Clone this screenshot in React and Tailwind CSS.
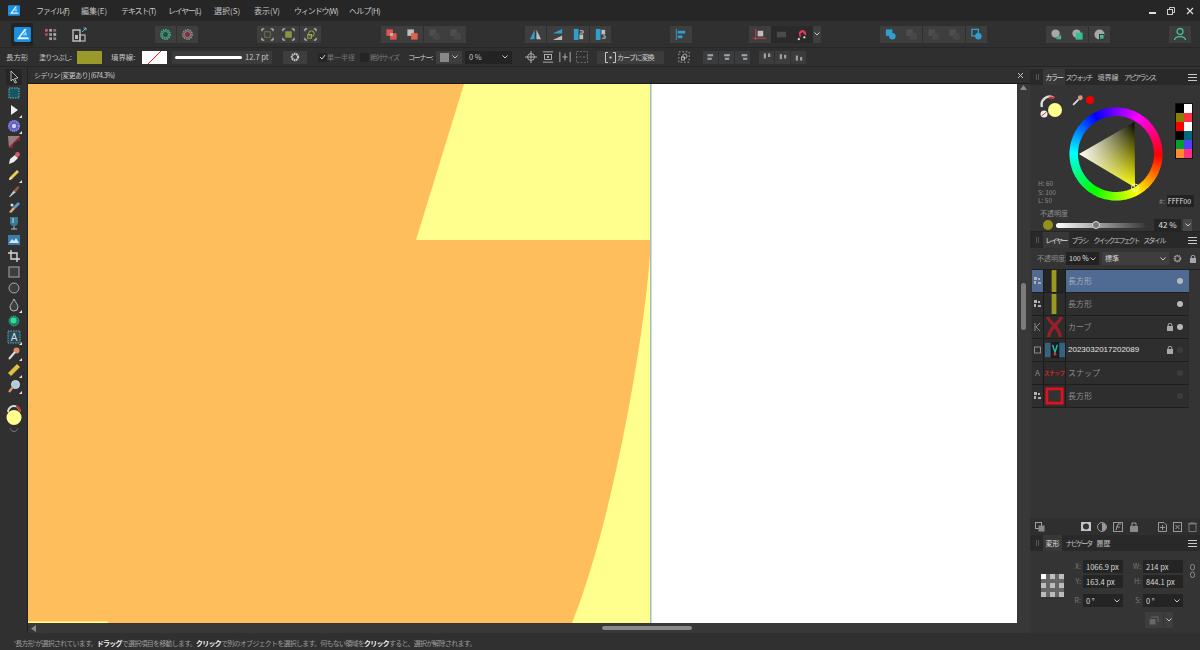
import React from 'react';

const MENU = [
  ['ファイル(F)', 'w-[45px]', 'tracking-[-1.3px]'],
  ['編集(E)', 'w-[40px]', ''],
  ['テキスト(T)', 'w-[47px]', 'tracking-[-1.1px]'],
  ['レイヤー(L)', 'w-[46px]', 'tracking-[-1.3px]'],
  ['選択(S)', 'w-[40px]', ''],
  ['表示(V)', 'w-[40px]', ''],
  ['ウィンドウ(W)', 'w-[55px]', 'tracking-[-1.1px]'],
  ['ヘルプ(H)', 'w-[30px]', 'tracking-[-0.7px]'],
];

const Logo = ({ className }) => (
  <svg viewBox="0 0 18 16" className={className}>
    <rect width="18" height="16" rx="1.5" fill="#1b8fe0" />
    <path d="M3 13 L11 2 L13.5 2 L6.5 11 L15 11 L16 13 Z" fill="#e8f6ff" />
    <path d="M9 9 L12.5 4 L14 9 Z" fill="#7fd0ff" />
  </svg>
);

const Btn = ({ children, dark, wide }) => (
  <div className={`${wide ? 'w-[22px]' : 'w-[21px]'} h-[17px] flex items-center justify-center ${dark ? 'bg-[#2a2a2a]' : 'bg-[#3e3e3e]'}`}>
    {children}
  </div>
);

const Ico = ({ children, size = 13 }) => (
  <svg width={size} height={size} viewBox="0 0 14 14">{children}</svg>
);

const Gear = ({ color, core }) => (
  <Ico>
    <circle cx="7" cy="7" r="5" fill="none" stroke={color} strokeWidth="1.6" strokeDasharray="1.8 0.7" />
    <circle cx="7" cy="7" r="3.4" fill={core} stroke={color} strokeWidth="1" />
  </Ico>
);

const Frame = ({ children }) => (
  <Ico>
    <path d="M1 3.5 V1 H3.5 M10.5 1 H13 V3.5 M13 10.5 V13 H10.5 M3.5 13 H1 V10.5" fill="none" stroke="#dcdcdc" strokeWidth="1" />
    {children}
  </Ico>
);

const Boolean1 = ({ a, b, dim }) => (
  <Ico>
    <rect x="1.5" y="1.5" width="7" height="7" fill={dim ? '#4e4e4e' : a} />
    <rect x="5.5" y="5.5" width="7" height="7" fill={dim ? '#484848' : b} />
  </Ico>
);

const Toolbar = () => (
  <div className="h-[27px] bg-[#303030] flex items-center border-b border-[#262626]">
    <div className="ml-[11px] w-[22px] h-[23px] bg-[#232323] flex items-center justify-center">
      <Logo className="w-[17px] h-[15px]" />
    </div>
    <div className="ml-[12px] w-[13px] h-[13px]">
      <svg viewBox="0 0 14 14" className="w-full h-full">
        <rect x="0" y="1" width="3" height="3" fill="#b8606a" /><rect x="4.5" y="1" width="3" height="3" fill="#b89a9a" /><rect x="9" y="1" width="3" height="3" fill="#777" />
        <rect x="0" y="5.5" width="3" height="3" fill="#a84a58" /><rect x="4.5" y="5.5" width="3" height="3" fill="#999" /><rect x="9" y="5.5" width="3" height="3" fill="#aaa" />
        <rect x="4.5" y="10" width="3" height="3" fill="#b89a9a" /><rect x="9" y="10" width="3" height="3" fill="#888" />
      </svg>
    </div>
    <div className="ml-[14px] w-[15px] h-[15px]">
      <svg viewBox="0 0 15 15" className="w-full h-full">
        <path d="M1 3 H8 V14 H1 Z" fill="none" stroke="#bbb" strokeWidth="1.4" />
        <rect x="3" y="8" width="3" height="4" fill="#bbb" />
        <rect x="8" y="8" width="5" height="6" fill="none" stroke="#bbb" strokeWidth="1.2" />
        <path d="M10 5 L14 1 M11.5 1 H14 V3.5" stroke="#5fb8d8" strokeWidth="1" fill="none" />
      </svg>
    </div>

    <div className="ml-[68px] flex gap-[0.5px]">
      <Btn><Gear color="#3fb98a" core="#2f4a45" /></Btn>
      <Btn><Gear color="#8f8f8f" core="#8a2a3c" /></Btn>
    </div>
    <div className="ml-[59px] flex gap-[0.5px]">
      <Btn><Frame><rect x="4" y="4" width="6" height="6" fill="none" stroke="#a8b04a" strokeDasharray="1 1" /></Frame></Btn>
      <Btn><Frame><rect x="3.5" y="3.5" width="7" height="7" fill="#8d9440" /></Frame></Btn>
      <Btn><Frame><circle cx="8" cy="6" r="3" fill="none" stroke="#a8b04a" /><rect x="4" y="7" width="4" height="4" fill="none" stroke="#a8b04a" /></Frame></Btn>
    </div>
    <div className="ml-[60px] flex gap-[0.5px]">
      <Btn><Ico><rect x="1.5" y="1.5" width="7" height="7" fill="#e2554f" /><rect x="5.5" y="5.5" width="7" height="7" fill="#e2554f" /><path d="M5.5 5.5 H8.5 V8.5 H5.5 Z" fill="#bbb" /></Ico></Btn>
      <Btn><Boolean1 a="#bdbdbd" b="#e2604f" /></Btn>
      <Btn><Boolean1 dim /></Btn>
      <Btn><Boolean1 dim /></Btn>
    </div>
    <div className="ml-[59px] flex gap-[0.5px]">
      <Btn><Ico><path d="M6 2 V12 H1 Z" fill="#2f9fd0" /><path d="M8 2 V12 H13 Z" fill="#bdbdbd" /></Ico></Btn>
      <Btn><Ico><path d="M12 1 V6 H2 Z" fill="#2f9fd0" /><path d="M12 8 V13 H2 Z" fill="#bdbdbd" /></Ico></Btn>
      <Btn><Ico><rect x="2" y="1" width="5" height="12" fill="#2f9fd0" /><rect x="8" y="7" width="4" height="5" fill="#bdbdbd" /><path d="M8.5 3 H12 V5.5 H8.5" fill="none" stroke="#ccc" /></Ico></Btn>
      <Btn><Ico><rect x="2" y="1" width="5" height="12" fill="#2f9fd0" /><rect x="8" y="2" width="4" height="5" fill="#bdbdbd" /><path d="M8.5 11 H12 V8.5 H10" fill="none" stroke="#ccc" /></Ico></Btn>
    </div>
    <div className="ml-[59px]">
      <Btn wide><Ico><path d="M2.5 1 V13" stroke="#2f9fd0" strokeWidth="1" /><rect x="4" y="3" width="8" height="3" fill="#2f9fd0" /><rect x="4" y="8" width="5" height="3" fill="#2f9fd0" /></Ico></Btn>
    </div>
    <div className="ml-[57px] flex">
      <Btn wide><Ico><path d="M3 1 V13 M0 11 H14" stroke="#d04050" strokeWidth="1" /><rect x="5" y="3" width="6" height="6" fill="#bdbdbd" /></Ico></Btn>
      <Btn dark><Ico><rect x="2" y="4" width="10" height="6" fill="#4a4a4a" /></Ico></Btn>
      <Btn dark><Ico><path d="M3.5 8 A4 4 0 1 1 10.5 8 L8.5 6.8 A1.8 1.8 0 1 0 5.5 8 L4 11 Z" fill="#e03a58" /><rect x="2" y="11" width="2" height="2" fill="#eee" /><rect x="8" y="9" width="2" height="2" fill="#eee" /></Ico></Btn>
      <div className="w-[8px] h-[17px] bg-[#3e3e3e] flex items-center justify-center text-[#cfcfcf]">
        <svg width="6" height="4" viewBox="0 0 6 4"><path d="M0.5 0.5 L3 3 L5.5 0.5" fill="none" stroke="currentColor" /></svg>
      </div>
    </div>
    <div className="ml-[59px] flex gap-[0.5px]">
      <Btn><Ico><rect x="2" y="1.5" width="7" height="7" fill="#2f9fd0" /><circle cx="9" cy="9" r="3.5" fill="#2f9fd0" /></Ico></Btn>
      <Btn><Boolean1 dim /></Btn>
      <Btn><Boolean1 dim /></Btn>
      <Btn><Boolean1 dim /></Btn>
      <Btn><Ico><rect x="2" y="1.5" width="7" height="7" fill="none" stroke="#2f9fd0" strokeWidth="1.4" /><circle cx="9" cy="9" r="3.5" fill="#2f9fd0" /></Ico></Btn>
    </div>
    <div className="ml-[59px] flex gap-[0.5px]">
      <Btn><Ico><circle cx="6" cy="6" r="4.5" fill="#a8a8a8" /><path d="M12 7 V12 H6 Z" fill="#35c08e" /></Ico></Btn>
      <Btn><Ico><circle cx="6" cy="6" r="4.5" fill="#a8a8a8" /><rect x="5" y="5" width="7.5" height="7.5" fill="#35c08e" /></Ico></Btn>
      <Btn><Ico><circle cx="7" cy="7" r="5.5" fill="#a8a8a8" /><rect x="7" y="7" width="5" height="5" fill="#35c08e" stroke="#333" /></Ico></Btn>
    </div>
    <div className="ml-[59px]">
      <Btn wide><Ico size={14}><circle cx="7" cy="4.5" r="3" fill="none" stroke="#45c090" strokeWidth="1.3" /><path d="M1.5 13 C2 8.5 12 8.5 12.5 13" fill="none" stroke="#45c090" strokeWidth="1.3" /></Ico></Btn>
    </div>
  </div>
);

const SmallIcon = ({ children }) => (
  <div className="w-[16px] h-[14px] flex items-center justify-center"><Ico size={12}>{children}</Ico></div>
);

const Chevron = ({ className }) => (
  <svg width="6" height="4" viewBox="0 0 6 4" className={className}><path d="M0.5 0.5 L3 3 L5.5 0.5" fill="none" stroke="#c8c8c8" /></svg>
);

const AlignBtn = ({ vertical, pos }) => (
  <div className="w-[15px] h-[13px] bg-[#3c3c3c] flex items-center justify-center">
    <Ico size={10}>
      {vertical ? (
        <>
          <rect x="2.5" y={pos === 0 ? 2 : pos === 1 ? 3 : 5} width="3" height="7" fill="#98a4ad" />
          <rect x="8.5" y={pos === 0 ? 2 : pos === 1 ? 4 : 7} width="3" height="5" fill="#98a4ad" />
        </>
      ) : (
        <>
          <rect x={pos === 0 ? 2 : pos === 1 ? 3 : 5} y="3" width="8" height="3" fill="#98a4ad" />
          <rect x={pos === 0 ? 2 : pos === 1 ? 4 : 7} y="8" width="6" height="3" fill="#98a4ad" />
        </>
      )}
    </Ico>
  </div>
);

const ContextBar = () => (
  <div className="h-[19px] bg-[#2f2f2f] flex items-center text-[7px] text-[#c4c4c4] border-b border-[#252525] whitespace-nowrap">
    <span className="ml-[6px] w-[33px] text-[7.4px]">長方形</span>
    <span className="w-[38px] tracking-[-0.8px]">塗りつぶし:</span>
    <div className="w-[25px] h-[13px] bg-[#9a9a2c]" />
    <span className="ml-[9px] w-[31px] text-[7.4px]">境界線:</span>
    <div className="w-[25px] h-[13px] bg-white">
      <svg viewBox="0 0 25 13" className="w-full h-full"><path d="M6 13 L19 0" stroke="#e02020" strokeWidth="1" /></svg>
    </div>
    <div className="ml-[5px] w-[100px] h-[13px] bg-[#3b3b3b] flex items-center pl-[3px]">
      <div className="w-[67px] h-[3px] bg-white rounded-full" />
      <span className="ml-[3px] text-[7.5px] text-[#c8c8c8]">12.7 pt</span>
    </div>
    <div className="ml-[11px] w-[24px] h-[13px] bg-[#3e3e3e] flex items-center justify-center">
      <svg width="10" height="10" viewBox="0 0 14 14"><circle cx="7" cy="7" r="4.4" fill="none" stroke="#c8c8c8" strokeWidth="3" strokeDasharray="2.3 0.8" /></svg>
    </div>
    <div className="ml-[11px] w-[9px] h-[9px] bg-[#252525] flex items-center justify-center">
      <svg width="7" height="6" viewBox="0 0 7 6"><path d="M1 3 L3 5 L6 1" fill="none" stroke="#c8c8c8" /></svg>
    </div>
    <span className="ml-[0px] w-[33px] pl-[0px] text-[#777]">単一半径</span>
    <div className="w-[9px] h-[9px] bg-[#252525]" />
    <span className="ml-[1px] w-[38px] text-[#777] tracking-[-1.2px]">絶対サイズ</span>
    <span className="w-[28px] tracking-[-1.2px]">コーナー:</span>
    <div className="w-[26px] h-[13px] bg-[#3e3e3e] flex items-center gap-[3px] pl-[4px]">
      <div className="w-[9px] h-[9px] bg-[#888]" />
      <Chevron />
    </div>
    <div className="ml-[3px] w-[47px] h-[13px] bg-[#232323] flex items-center justify-between px-[4px] text-[7.5px]">
      <span>0 %</span>
      <Chevron />
    </div>
    <div className="ml-[11px] flex gap-px">
      <SmallIcon><circle cx="7" cy="7" r="4" fill="none" stroke="#c0c0c0" /><path d="M7 0 V14 M0 7 H14" stroke="#c0c0c0" /></SmallIcon>
      <SmallIcon><path d="M1 1 H13 M1 13 H13" stroke="#c0c0c0" /><rect x="3" y="4" width="8" height="6" fill="none" stroke="#c0c0c0" /><circle cx="7" cy="7" r="1.3" fill="#c0c0c0" /></SmallIcon>
      <SmallIcon><path d="M1 1 V13 M13 1 V13" stroke="#c0c0c0" /><path d="M4 7 H10 M7 3 V11" stroke="#c0c0c0" /></SmallIcon>
      <SmallIcon><rect x="0.5" y="0.5" width="13" height="13" fill="none" stroke="#777" strokeDasharray="2.5 1.5" /><path d="M0 7 H14" stroke="#777" strokeDasharray="2.5 1.5" /></SmallIcon>
    </div>
    <div className="ml-[7px] w-[67px] h-[13px] bg-[#3c3c3c] flex items-center pl-[8px] gap-[1px]">
      <svg width="11" height="11" viewBox="0 0 11 11"><path d="M3 0.5 H0.5 V10.5 H3 M8 0.5 H10.5 V10.5 H8" fill="none" stroke="#c8c8c8" /><rect x="4.5" y="4.5" width="2" height="2" fill="#c8c8c8" /></svg>
      <span className="tracking-[-0.8px] text-[#d0d0d0]">カーブに変換</span>
    </div>
    <div className="ml-[12px]">
      <SmallIcon><rect x="1" y="1" width="12" height="12" fill="none" stroke="#b0b0b0" strokeDasharray="2 2" /><circle cx="8" cy="6" r="2.5" fill="none" stroke="#c0c0c0" /><rect x="4" y="7" width="3.5" height="3.5" fill="none" stroke="#c0c0c0" /></SmallIcon>
    </div>
    <div className="ml-[11px] flex gap-px">
      <AlignBtn pos={0} /><AlignBtn pos={1} /><AlignBtn pos={2} />
    </div>
    <div className="ml-[9px] flex gap-px">
      <AlignBtn vertical pos={0} /><AlignBtn vertical pos={1} /><AlignBtn vertical pos={2} />
    </div>
  </div>
);

const Corner = () => (
  <svg width="3" height="3" viewBox="0 0 3 3" className="absolute right-0 bottom-0"><path d="M3 0 V3 H0 Z" fill="#e8e8e8" /></svg>
);

const Tool = ({ children, corner, active }) => (
  <div className={`relative w-[16px] h-[16px] flex items-center justify-center ${active ? 'bg-[#262626]' : ''}`}>
    <svg width="14" height="14" viewBox="0 0 14 14">{children}</svg>
    {corner && <Corner />}
  </div>
);

const LeftTools = () => (
  <div className="w-[28px] shrink-0 bg-[#303030] flex flex-col items-center pt-[2px] gap-[0.25px] border-r border-[#222]">
    <Tool active><path d="M4 1 L11 8 L7.5 8.5 L9.5 12.5 L8 13 L6 9 L4 11 Z" fill="#222" stroke="#ddd" strokeWidth="0.8" /></Tool>
    <Tool><rect x="2" y="2" width="10" height="10" fill="#155566" stroke="#6bb" strokeDasharray="1.5 1" /></Tool>
    <Tool corner><path d="M4 2 L11 7 L4 12 Z" fill="#eee" /></Tool>
    <Tool corner><circle cx="7" cy="7" r="5" fill="#5a5ac8" stroke="#8a8ae8" strokeDasharray="1.5 0.6" strokeWidth="2" /><circle cx="7" cy="7" r="2.2" fill="#cfd0f0" /></Tool>
    <Tool><path d="M1 1 H13 V6 C8 6 6 8 6 13 H2 Z" fill="#8c2733" /><path d="M1 1 H13 L2 12 Z" fill="#9a9a9a" opacity="0.75" /></Tool>
    <Tool><path d="M2 13 L3 8 L8 4 L11 7 L7 11 Z" fill="#eee" /><circle cx="10.5" cy="3.5" r="2.4" fill="#d85a6a" /></Tool>
    <Tool corner><path d="M2 12 L3 9 L10 2 L12 4 L5 11 Z" fill="#e4cf54" /><path d="M2 12 L3 9 L5 11 Z" fill="#eee" /></Tool>
    <Tool><path d="M2 13 L7 6 L9 8 L3 13 Z" fill="#c9c9c9" /><path d="M6 7 L11 2 L12.5 3.5 L9 8 Z" fill="#9a5a40" /></Tool>
    <Tool><path d="M2 12 L6 7 L8 9 L4 13 Z" fill="#d8b078" /><path d="M6 7 L11 2 L13 4 L8 9 Z" fill="#5c9ad0" /><circle cx="5" cy="5" r="1.5" fill="#ddd" /></Tool>
    <Tool><path d="M3 1 H11 V6 A4 4 0 0 1 3 6 Z" fill="#3b7a95" /><path d="M7 10 V13 M4 13 H10" stroke="#bbb" /><path d="M6 2 V7" stroke="#cde" /></Tool>
    <Tool><rect x="1" y="2" width="12" height="10" fill="#3b7fa8" /><path d="M2 10 L5 6 L7 8 L9 5 L12 10 Z" fill="#cfe6f0" /></Tool>
    <Tool><path d="M4 1 V10 H13 M1 4 H10 V13" fill="none" stroke="#d8d8d8" strokeWidth="1.4" /></Tool>
    <Tool><rect x="2" y="2" width="10" height="10" fill="#3d3d3d" stroke="#a8a8a8" strokeWidth="1" /></Tool>
    <Tool><circle cx="7" cy="7" r="5" fill="#3d3d3d" stroke="#a8a8a8" strokeWidth="1" /></Tool>
    <Tool corner><path d="M7 1 C9 5 11 7 11 9 A4 4 0 0 1 3 9 C3 7 5 5 7 1 Z" fill="#3d3d3d" stroke="#b8b8b8" /></Tool>
    <Tool><circle cx="7" cy="7" r="5" fill="#1a7f6a" stroke="#4aa" strokeDasharray="1 1" /><circle cx="6.5" cy="6.5" r="3" fill="#2fe08a" /></Tool>
    <Tool corner><rect x="1" y="1" width="12" height="12" fill="#264a58" stroke="#6aa" strokeDasharray="1.5 1" /><text x="7" y="11" textAnchor="middle" fontSize="10" fill="#ddd" fontFamily="Liberation Sans">A</text></Tool>
    <Tool corner><circle cx="9.5" cy="4.5" r="3" fill="#d88a6a" /><path d="M2 13 L8 6" stroke="#ddd" strokeWidth="2" /></Tool>
    <Tool corner><path d="M1 10 L10 1 L13 4 L4 13 Z" fill="#e0c040" /></Tool>
    <Tool corner><circle cx="8.5" cy="5.5" r="4" fill="#a8cfe0" stroke="#ddd" /><path d="M2 13 L6 8" stroke="#d89a6a" strokeWidth="2.2" /></Tool>
    <div className="mt-[9px] w-[20px] h-[23px]">
      <svg viewBox="0 0 20 23" className="w-full h-full">
        <path d="M4 9 A6 6 0 0 1 16 9" fill="none" stroke="#ddd" strokeWidth="2" />
        <path d="M12 3.4 A6 6 0 0 1 16 9" fill="none" stroke="#d03030" strokeWidth="2" />
        <circle cx="10" cy="14.5" r="7.5" fill="#ffff8e" />
      </svg>
    </div>
    <svg width="10" height="5" viewBox="0 0 10 5" className="mt-[2px]"><path d="M1 0.5 C3 4.5 7 4.5 9 0.5" fill="none" stroke="#777" /></svg>
  </div>
);

const Canvas = () => (
  <div className="flex-1 flex flex-col min-w-0">
    <div className="h-[17px] bg-[#303030] flex items-center justify-between pl-[6px] pr-[6px] text-[7px] text-[#c8c8c8] border-b border-[#1c1c1c]">
      <span className="tracking-[-0.6px]">シデリン [変更あり] (674.3%)</span>
      <svg width="7" height="7" viewBox="0 0 7 7"><path d="M1 1 L6 6 M6 1 L1 6" stroke="#c8c8c8" /></svg>
    </div>
    <div className="flex-1 flex min-h-0">
      <svg viewBox="0 0 989 539" className="w-[989px] h-[539px] shrink-0 bg-white">
        <rect x="0" y="0" width="623" height="539" fill="#ffff8e" />
        <path d="M0 0 H436 L388 156 H623 C618 250 584 440 544 539 H0 Z" fill="#ffbe5c" />
        <rect x="0" y="537.5" width="80" height="1.5" fill="#ffff8e" />
        <rect x="622" y="0" width="1.5" height="539" fill="#9dbcc4" />
      </svg>
      <div className="flex-1 bg-[#383838] flex flex-col items-center pt-[1px]">
        <svg width="7" height="5" viewBox="0 0 7 5"><path d="M3.5 0 L7 5 H0 Z" fill="#8a8a8a" /></svg>
        <div className="mt-[193px] w-[5px] h-[47px] rounded-full bg-[#7c7c7c]" />
      </div>
    </div>
    <div className="h-[10px] bg-[#383838] flex items-center pl-[3px]">
      <svg width="5" height="7" viewBox="0 0 5 7"><path d="M0 3.5 L5 0 V7 Z" fill="#8a8a8a" /></svg>
      <div className="ml-[566px] w-[90px] h-[4px] rounded-full bg-[#8a8a8a]" />
    </div>
  </div>
);

const PanelTabs = ({ tabs }) => (
  <div className="h-[16px] bg-[#292929] flex items-center pl-[2px] text-[7px] text-[#c0c0c0] whitespace-nowrap">
    <div className="w-[11px] flex justify-center"><div className="w-[3px] h-[6px] border-x border-[#555]" /></div>
    {tabs.map(([t, w, track], i) => (
      <div key={t} className={`h-full flex items-center justify-center ${w} ${track} ${i === 0 ? 'bg-[#383838] text-[#e0e0e0]' : ''}`}>{t}</div>
    ))}
    <svg width="9" height="7" viewBox="0 0 9 7" className="ml-auto mr-[3px]"><path d="M0 0.5 H9 M0 3.5 H9 M0 6.5 H9" stroke="#c8c8c8" /></svg>
  </div>
);

const Wheel = () => {
  const segs = Array.from({ length: 120 }, (_, i) => {
    const a0 = (i * 3 * Math.PI) / 180;
    const a1 = ((i + 1.3) * 3 * Math.PI) / 180;
    const p = (r, a) => `${47 + r * Math.cos(a)} ${47 + r * Math.sin(a)}`;
    return {
      d: `M${p(46.5, a0)} A46.5 46.5 0 0 1 ${p(46.5, a1)} L${p(38, a1)} A38 38 0 0 0 ${p(38, a0)} Z`,
      fill: `hsl(${i * 3},100%,50%)`,
    };
  });
  return (
    <svg width="94" height="94" viewBox="0 0 94 94" className="shrink-0 block">
      <defs>
        <linearGradient id="tv" x1="0" y1="0" x2="0" y2="1">
          <stop offset="0" stopColor="#000" />
          <stop offset="1" stopColor="#ffff00" />
        </linearGradient>
        <linearGradient id="th" x1="0" y1="0" x2="1" y2="0">
          <stop offset="0" stopColor="#fff" />
          <stop offset="1" stopColor="#fff" stopOpacity="0" />
        </linearGradient>
      </defs>
      {segs.map((s, i) => <path key={i} d={s.d} fill={s.fill} />)}
      <path d="M65.5 15 L10 47 L66 80.5 Z" fill="url(#tv)" />
      <path d="M65.5 15 L10 47 L66 80.5 Z" fill="url(#th)" />
      <circle cx="66" cy="80.5" r="3.5" fill="none" stroke="#eee" strokeWidth="1" />
    </svg>
  );
};

const SWATCHES = ['#000000', '#ffffff', '#8a8000', '#ff3040', '#ff0000', '#ffffff', '#000000', '#006a7a', '#00a030', '#5040ff', '#ff8a30', '#ff3080'];

const ColorPanel = () => (
  <div className="h-[147px] flex flex-col border-b border-[#252525]">
    <div className="flex h-[127px]">
      <div className="w-[39px] pl-[10px] pt-[10px] shrink-0 flex flex-col">
        <svg width="25" height="25" viewBox="0 0 25 25">
          <path d="M2 12 A8 8 0 0 1 14 3" fill="none" stroke="#ddd" strokeWidth="2.4" />
          <path d="M9 3 A8 8 0 0 1 14 3" fill="none" stroke="#d03030" strokeWidth="2.4" />
          <circle cx="15" cy="15" r="7" fill="#ffff8e" />
          <circle cx="4" cy="19" r="3.5" fill="#eee" />
          <path d="M1.5 21 L6.5 17" stroke="#d03030" />
        </svg>
        <div className="mt-[59px] -ml-[2px] text-[6.5px] leading-[8.5px] text-[#8a8a8a] whitespace-nowrap">
          <div>H: 60</div><div>S: 100</div><div>L: 50</div>
        </div>
      </div>
      <div className="pt-[8px]">
        <div className="flex items-center h-[14px] ml-[3px]">
          <svg width="11" height="11" viewBox="0 0 10 10"><path d="M1 9 L6 4" stroke="#ddd" strokeWidth="1.6" /><circle cx="7.5" cy="2.5" r="2.2" fill="#d89a7a" /></svg>
          <div className="ml-[3px] w-[8px] h-[8px] rounded-full bg-[#f00000]" />
        </div>
        <Wheel />
      </div>
      <div className="-ml-[5px] w-[36px] shrink-0 pt-[18px] flex flex-col items-end">
        <div className="grid grid-cols-2 w-[18px] mr-[1px] border border-[#111]">
          {SWATCHES.map((c, i) => <div key={i} className="h-[9px]" style={{ background: c }} />)}
        </div>
        <div className="mt-[36px] w-full flex items-center text-[7px] text-[#8f8f8f]">
          <span className="ml-[1px] mr-[2px]">#:</span>
          <div className="flex-1 h-[12px] bg-[#232323] text-[#e0e0e0] px-[1px] leading-[12px]">FFFF00</div>
        </div>
      </div>
    </div>
    <div className="flex items-center h-[12px] pl-[10px] -mt-[2px] text-[7px] text-[#8f8f8f]">不透明度</div>
    <div className="flex-1 flex items-center pl-[13px]">
      <div className="w-[10px] h-[10px] rounded-full bg-[#94901c]" />
      <div className="ml-[3px] relative w-[89px] h-[5px] rounded-full bg-[linear-gradient(to_right,#ffffff,#3a3a3a)]">
        <div className="absolute left-[36px] -top-[2px] w-[8px] h-[8px] rounded-full bg-[#777] border border-[#ddd]" />
      </div>
      <div className="ml-[9px] w-[27px] h-[12px] bg-[#242424] text-[#e0e0e0] text-[8px] flex items-center justify-center">42 %</div>
      <div className="ml-[2px] w-[9px] h-[12px] bg-[#484848] flex items-center justify-center"><Chevron /></div>
    </div>
  </div>
);

const thumbs = [
  <svg viewBox="0 0 22 23" className="w-full h-full"><rect width="22" height="23" fill="#242424" /><rect x="8" y="0" width="5" height="23" fill="#9a9a20" /></svg>,
  <svg viewBox="0 0 22 23" className="w-full h-full"><rect width="22" height="23" fill="#2c2c2c" /><rect x="8" y="1" width="5" height="21" fill="#9a9a20" /></svg>,
  <svg viewBox="0 0 22 23" className="w-full h-full"><rect width="22" height="23" fill="#2c2c2c" /><path d="M4 1 C5 7 17 12 17 22 M18 1 C17 7 5 12 5 22" fill="none" stroke="#9a1f2a" strokeWidth="3.4" /></svg>,
  <svg viewBox="0 0 22 23" className="w-full h-full"><rect width="22" height="23" fill="#2c2c2c" /><rect x="1" y="4" width="21" height="15" fill="#37637f" /><rect x="7" y="3" width="9" height="17" fill="#1a1a20" /><path d="M9 6 L11.5 14 L14 6" fill="none" stroke="#20c0a0" strokeWidth="1.5" /><circle cx="11.5" cy="16" r="1.5" fill="#d03030" /></svg>,
  <svg viewBox="0 0 22 23" className="w-full h-full"><rect width="22" height="23" fill="#2c2c2c" /><text x="11" y="14" textAnchor="middle" fontSize="5.5" fill="#e02020" fontWeight="700" fontFamily="Noto Sans CJK JP">スナップ</text></svg>,
  <svg viewBox="0 0 22 23" className="w-full h-full"><rect width="22" height="23" fill="#2c2c2c" /><rect x="3" y="4" width="16" height="15" fill="#333" stroke="#e01020" strokeWidth="3" /></svg>,
];

const LAYERS = [
  { name: '長方形', kind: 'dots', dot: '#b8b8b8', selected: true },
  { name: '長方形', kind: 'dots', dot: '#b8b8b8' },
  { name: 'カーブ', kind: 'curve', dot: '#b8b8b8', lock: true },
  { name: '2023032017202089', kind: 'img', dot: '#3c3c3c', lock: true, bright: true },
  { name: 'スナップ', kind: 'a', dot: '#3c3c3c' },
  { name: '長方形', kind: 'dots', dot: '#3c3c3c' },
];

const LayerKind = ({ kind }) => {
  if (kind === 'a') return <span className="text-[8px] text-[#888]">A</span>;
  return (
    <svg width="7" height="8" viewBox="0 0 7 8">
      {kind === 'dots' && <path d="M0 0 H3 V3 H0 Z M4 1 H6 V3 H4 Z M0 4 H2 V7 H0 Z M4 5 H7 V7 H4 Z" fill="#b0b0b0" />}
      {kind === 'curve' && <path d="M1 0 V8 M6 0 L2 4 L6 8" fill="none" stroke="#8a8a8a" />}
      {kind === 'img' && <rect x="0.5" y="1" width="6" height="6" fill="none" stroke="#8a8a8a" />}
    </svg>
  );
};

const Lock = () => (
  <svg width="6" height="8" viewBox="0 0 6 8"><rect y="3" width="6" height="5" fill="#a8a8a8" /><path d="M1.2 3 V2 A1.8 1.8 0 0 1 4.8 2 V3" fill="none" stroke="#a8a8a8" /></svg>
);

const LayerRow = ({ layer, thumb }) => (
  <div className={`h-[23px] w-[157px] flex items-center border-b border-[#1e1e1e] ${layer.selected ? 'bg-[#4f6b93]' : 'bg-[#2e2e2e]'}`}>
    <div className="w-[11px] flex justify-center"><LayerKind kind={layer.kind} /></div>
    <div className="w-[23px] h-full border-x border-[#1a1a1a]">{thumb}</div>
    <span className={`ml-[2px] text-[8px] ${layer.bright ? 'text-[#e4e4e4] font-["Liberation_Sans"]' : layer.selected ? 'text-[#a4acb8]' : 'text-[#8c8c8c]'}`}>{layer.name}</span>
    <div className="ml-auto w-[8px] flex justify-center">{layer.lock && <Lock />}</div>
    <div className="ml-[3px] mr-[6px] w-[6px] h-[6px] rounded-full" style={{ background: layer.dot }} />
  </div>
);

const LayersPanel = () => (
  <div className="flex flex-col h-[303px]">
    <PanelTabs tabs={[['レイヤー', 'w-[26px]', 'tracking-[-1.6px]'], ['ブラシ', 'w-[21px]', 'tracking-[-1.6px]'], ['クイックエフェクト', 'w-[52px]', 'tracking-[-2px]'], ['スタイル', 'w-[24px]', 'tracking-[-1.6px]']]} />
    <div className="h-[21px] flex items-center pl-[7px] text-[7px] text-[#8a8a8a] whitespace-nowrap">
      <span className="w-[29px]">不透明度:</span>
      <div className="w-[33px] h-[13px] bg-[#232323] text-[#e0e0e0] flex items-center justify-between px-[3px]"><span>100 %</span><Chevron /></div>
      <div className="ml-[3px] w-[67px] h-[13px] bg-[#3e3e3e] text-[#d0d0d0] flex items-center justify-between px-[3px]"><span>標準</span><Chevron /></div>
      <svg width="9" height="9" viewBox="0 0 14 14" className="ml-[4px]"><circle cx="7" cy="7" r="4.4" fill="none" stroke="#a0a0a0" strokeWidth="3" strokeDasharray="2.3 0.8" /></svg>
      <div className="ml-[8px]"><Lock /></div>
    </div>
    <div className="ml-[2px] flex-1 flex flex-col border-t border-[#1e1e1e]">
      {LAYERS.map((l, i) => <LayerRow key={i} layer={l} thumb={thumbs[i]} />)}
    </div>
    <div className="h-[17px] flex items-center pl-[5px] pr-[3px] bg-[#2f2f2f]">
      <svg width="10" height="10" viewBox="0 0 10 10"><rect x="0.5" y="0.5" width="6" height="6" fill="none" stroke="#a0a0a0" /><rect x="3.5" y="3.5" width="6" height="6" fill="#8a8a8a" /></svg>
      <div className="ml-auto flex items-center gap-[3px] text-[#a8a8a8]">
        <svg width="10" height="9" viewBox="0 0 10 9"><rect width="10" height="9" fill="#c4c4c4" /><circle cx="5" cy="4.5" r="3" fill="#333" /></svg>
        <svg width="10" height="10" viewBox="0 0 10 10" className="ml-[3px]"><circle cx="5" cy="5" r="4.5" fill="none" stroke="#999" /><path d="M5 1 A4 4 0 0 1 5 9 Z" fill="#999" /></svg>
        <svg width="10" height="10" viewBox="0 0 10 10" className="ml-[3px]"><rect x="0.5" y="0.5" width="9" height="9" fill="none" stroke="#999" /><path d="M3 8 L5 2 M5 2 H8 M3 5 H7" stroke="#999" /></svg>
        <svg width="10" height="10" viewBox="0 0 10 10" className="ml-[3px]"><rect x="1" y="4" width="8" height="6" fill="#8a8a8a" /><path d="M3 4 V1 H7 V4" fill="none" stroke="#999" /></svg>
        <svg width="9" height="10" viewBox="0 0 9 10" className="ml-[16px]"><path d="M0.5 0.5 H6 L8.5 3 V9.5 H0.5 Z" fill="none" stroke="#999" /><path d="M4.5 3 V8 M2 5.5 H7" stroke="#999" /></svg>
        <svg width="9" height="10" viewBox="0 0 9 10" className="ml-[3px]"><rect x="0.5" y="0.5" width="8" height="9" fill="none" stroke="#999" /><path d="M2.5 3 L6.5 7 M6.5 3 L2.5 7" stroke="#999" /></svg>
        <svg width="9" height="10" viewBox="0 0 9 10" className="ml-[3px]"><path d="M1 2 H8 V9.5 H1 Z M0 1.5 H9 M3 1 V0 H6 V1" fill="none" stroke="#777" /></svg>
      </div>
    </div>
  </div>
);

const Field = ({ label, value, chev, w = 'w-[40px]' }) => (
  <div className="flex items-center h-[13px]">
    <span className="w-[10px] text-right pr-[2px] text-[#777] text-[7px]">{label}</span>
    <div className={`${w} h-[13px] bg-[#242424] text-[#d8d8d8] text-[7.5px] flex items-center justify-between pl-[3px] pr-[3px]`}>
      <span>{value}</span>{chev && <Chevron />}
    </div>
  </div>
);

const TransformPanel = () => (
  <div className="flex-1 flex flex-col">
    <PanelTabs tabs={[['変形', 'w-[19px]', ''], ['ナビゲータ', 'w-[33px]', 'tracking-[-1.8px]'], ['履歴', 'w-[17px]', '']]} />
    <div className="flex flex-1 pt-[9px]">
      <div className="w-[43px] shrink-0 pl-[11px] pt-[14px]">
        <div className="grid grid-cols-3 gap-[4px] w-[23px] bg-[#666]">
          {Array.from({ length: 9 }, (_, i) => (
            <div key={i} className={`w-[5px] h-[5px] ${i === 0 ? 'bg-white' : 'bg-[#bdbdbd]'}`} />
          ))}
        </div>
      </div>
      <div className="flex-1">
        <div className="grid grid-cols-[60px_50px] gap-y-[2px]">
          <Field label="X:" value="1066.9 px" /><Field label="W:" value="214 px" />
          <Field label="Y:" value="163.4 px" /><Field label="H:" value="844.1 px" />
        </div>
        <div className="grid grid-cols-[60px_50px] mt-[6px]">
          <Field label="R:" value="0 °" chev /><Field label="S:" value="0 °" chev />
        </div>
        <div className="mt-[5px] ml-[72px] flex gap-px">
          <div className="w-[18px] h-[16px] bg-[#3e3e3e] flex items-center justify-center">
            <svg width="10" height="10" viewBox="0 0 10 10"><rect x="0.5" y="4" width="6" height="5.5" fill="#666" /><path d="M2 2 H9 V7" fill="none" stroke="#666" /></svg>
          </div>
          <div className="w-[9px] h-[16px] bg-[#3e3e3e] flex items-center justify-center"><Chevron /></div>
        </div>
      </div>
      <div className="w-[10px] shrink-0 pt-[4px]">
        <svg width="5" height="14" viewBox="0 0 5 14"><rect x="0.5" y="0.5" width="4" height="5.5" rx="2" fill="none" stroke="#8a8a8a" /><rect x="0.5" y="8" width="4" height="5.5" rx="2" fill="none" stroke="#8a8a8a" /></svg>
      </div>
    </div>
  </div>
);

const RightPanels = () => (
  <div className="w-[170px] shrink-0 bg-[#343434] flex flex-col pt-[2px]">
    <PanelTabs tabs={[['カラー', 'w-[22px]', 'tracking-[-1.2px]'], ['スウォッチ', 'w-[27px]', 'tracking-[-1.8px]'], ['境界線', 'w-[32px]', ''], ['アピアランス', 'w-[31px]', 'tracking-[-1.8px]']]} />
    <ColorPanel />
    <LayersPanel />
    <TransformPanel />
  </div>
);

const StatusBar = () => (
  <div className="h-[17px] bg-[#303030] flex items-center pt-[3px] pl-[14px] text-[7px] tracking-[-0.75px] text-[#9a9a9a] whitespace-nowrap">
    <span>'長方形'が選択されています。</span>
    <b className="text-[#f0f0f0]">ドラッグ</b>
    <span>で選択項目を移動します。</span>
    <b className="text-[#f0f0f0]">クリック</b>
    <span>で別のオブジェクトを選択します。何もない領域を</span>
    <b className="text-[#f0f0f0]">クリック</b>
    <span>すると、選択が解除されます。</span>
  </div>
);

export default function App() {
  return (
    <div className="w-[1200px] h-[650px] flex flex-col overflow-hidden bg-[#303030] font-['Noto_Sans_CJK_JP','Noto_Sans',sans-serif]">
      <div className="h-[21px] bg-[#262626] flex items-center text-[8px] text-[#c4c4c4] whitespace-nowrap">
        <Logo className="ml-[8px] w-[12px] h-[11px]" />
        <div className="ml-[16px] flex">
          {MENU.map(([label, w, track]) => <span key={label} className={`${w} ${track}`}>{label}</span>)}
        </div>
        <div className="ml-auto mr-[6px] flex items-center gap-[11px]">
          <svg width="7" height="7" viewBox="0 0 7 7"><rect y="5" width="7" height="2" fill="#ddd" /></svg>
          <svg width="8" height="8" viewBox="0 0 8 8"><rect x="0.5" y="2.5" width="5" height="5" fill="none" stroke="#ccc" /><path d="M2.5 2.5 V0.5 H7.5 V5.5 H5.5" fill="none" stroke="#ccc" /></svg>
          <svg width="8" height="8" viewBox="0 0 8 8"><path d="M1 1 L7 7 M7 1 L1 7" stroke="#ddd" strokeWidth="1.2" /></svg>
        </div>
      </div>
      <Toolbar />
      <ContextBar />
      <div className="flex-1 flex min-h-0">
        <LeftTools />
        <Canvas />
        <RightPanels />
      </div>
      <StatusBar />
    </div>
  );
}
